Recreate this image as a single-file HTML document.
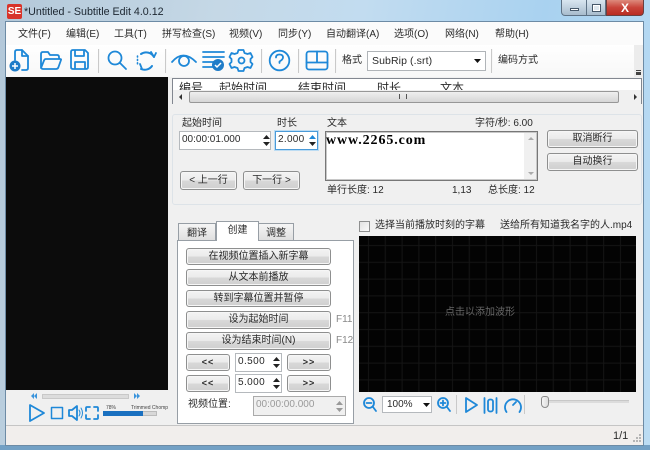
<!DOCTYPE html>
<html><head><meta charset="utf-8"><style>
html,body{margin:0;padding:0}
body{width:650px;height:450px;overflow:hidden;position:relative;background:#b5d3ec;font:10px/14px "Liberation Sans","Noto Sans CJK SC",sans-serif;color:#2a2a2a;filter:blur(.3px)}
div,span{position:absolute;box-sizing:border-box;white-space:nowrap}
svg{position:absolute;overflow:visible}
.t{line-height:14px}
.c{text-align:center}
.btn{background:linear-gradient(#f3f3f3,#ebebeb 48%,#d8d8d8 52%,#cfcfcf);border:1px solid #8e8f8f;border-radius:3px;text-align:center;line-height:15px;box-shadow:inset 0 0 0 1px #f6f6f6}
.in{background:#fff;border:1px solid #b5b9bd;line-height:16px;padding-left:2px}
.ic{fill:none;stroke:#1e88d8;stroke-width:1.8;stroke-linecap:round;stroke-linejoin:round}
.sep{width:2px;background:#c9c9c9;border-right:1px solid #f7f7f7}
.bl{fill:#111}
</style></head><body>
<div style="left:0;top:0;width:650px;height:450px;background:linear-gradient(100deg,#b3c8d9 0,#c5d8e6 30%,#c2dcf0 50%,#a9d2f0 75%,#bcdcf3 100%)"></div>
<div style="left:0;top:445px;width:650px;height:5px;background:#73a0c4"></div>
<div style="left:5px;top:21px;width:639px;height:425px;background:#f0f0f0;border:1px solid #6d8ba5"></div>

<!-- title -->
<div style="left:7px;top:4px;width:15px;height:15px;background:#d8332a;border-radius:2px;color:#fff;font:bold 10px/15px 'Liberation Sans';text-align:center">SE</div>
<div class="t" style="left:24px;top:5px;font-size:10.7px;color:#1c2630">*Untitled - Subtitle Edit 4.0.12</div>
<div style="left:561px;top:0;width:26px;height:16px;background:linear-gradient(#d9e6f0,#a8bccd);border:1px solid #5e7285;border-top:0;border-radius:0 0 0 4px"></div>
<div style="left:570px;top:8px;width:9px;height:3px;background:#fff;border:1px solid #46586a"></div>
<div style="left:587px;top:0;width:19px;height:16px;background:linear-gradient(#d9e6f0,#a8bccd);border:1px solid #5e7285;border-top:0;border-left:0"></div>
<div style="left:592px;top:4px;width:9px;height:8px;background:#dfe8ef;border:1px solid #46586a;box-shadow:inset 0 0 0 1px #fff"></div>
<div style="left:606px;top:0;width:38px;height:16px;background:linear-gradient(#dd8a7c,#c9443a 50%,#b92c22);border:1px solid #6a4040;border-top:0;border-radius:0 0 4px 0"></div>
<div style="left:606px;top:1px;width:38px;height:14px;color:#fff;font:bold 12px/14px 'Liberation Sans';text-align:center">X</div>

<!-- menu -->
<div style="left:6px;top:22px;width:637px;height:23px;background:#fbfbfb"></div>
<div class="t" style="left:18px;top:28px">文件(F)</div>
<div class="t" style="left:66px;top:28px">编辑(E)</div>
<div class="t" style="left:114px;top:28px">工具(T)</div>
<div class="t" style="left:162px;top:28px">拼写检查(S)</div>
<div class="t" style="left:229px;top:28px">视频(V)</div>
<div class="t" style="left:278px;top:28px">同步(Y)</div>
<div class="t" style="left:326px;top:28px">自动翻译(A)</div>
<div class="t" style="left:394px;top:28px">选项(O)</div>
<div class="t" style="left:445px;top:28px">网络(N)</div>
<div class="t" style="left:495px;top:28px">帮助(H)</div>

<!-- toolbar -->
<div style="left:6px;top:45px;width:637px;height:32px;background:linear-gradient(#fff,#f7f7f7)"></div>
<div style="left:634px;top:45px;width:9px;height:32px;background:#ececec"></div>
<div style="left:636px;top:70px;width:5px;height:5px;border-top:1px solid #444;border-bottom:3px solid #444"></div>
<svg style="left:0;top:0" width="650" height="80" viewBox="0 0 650 80">
<g class="ic">
<path d="M15 60V52q0-2 2-2h5l6 6v12q0 2-2 2h-4"/><path d="M22 50v6h6"/>
<path d="M41 68V54q0-2 2-2h5l2 3h7q2 0 2 2v2M41 68q1 1 2 1h13q2 0 2.500-2l2.500-7q.5-1-1-1H46q-1.500 0-2 1.500L41 68"/>
<path d="M71 52q0-2 2-2h12l3 3v14q0 2-2 2H73q-2 0-2-2zM75 50v6h9v-6M75 69v-7h10v7"/>
<circle cx="115" cy="58" r="6.500"/><path d="M120 63l6 6"/>
<path d="M141 54a9 9 0 0 1 13 3M152 66a9 9 0 0 1-11 3" stroke-width="2"/><path d="M151 52l3 5 2-4M140 64l2 5"/>
<path d="M137.500 56v9" stroke-width="1.600" stroke-dasharray="1 2.400"/>
<path d="M172 62q11-13 24 0"/><circle cx="184" cy="61" r="5"/>
<path d="M203 52h21M203 57h21M203 62h12M203 67h10"/>
<path d="M239 50h5l1 3 3 1 3-1 2 4-2 2v3l2 2-2 4-3-1-3 1-1 3h-5l-1-3-3-1-3 1-2-4 2-2v-3l-2-2 2-4 3 1 3-1z" transform="translate(-.5 0)"/><circle cx="241.500" cy="60.500" r="3"/>
<circle cx="279.500" cy="60.500" r="9.800"/><path d="M276 57.500q0-3 3.500-3t3.500 3q0 2-3.500 4v1.500"/>
<rect x="306.500" y="51.500" width="21" height="18" rx="2.500"/><path d="M306.500 62.500h21M317 51.500v11"/>
</g>
<circle cx="15" cy="66" r="5.500" fill="#1f7cc8"/><path d="M12 66h6M15 63v6" stroke="#fff" stroke-width="1.500"/>
<circle cx="218" cy="65" r="6" fill="#1f7cc8"/><path d="M215 65l2 2 4-4" stroke="#fff" stroke-width="1.500" fill="none"/>
</svg>
<div class="sep" style="left:98px;top:49px;height:24px"></div>
<div class="sep" style="left:165px;top:49px;height:24px"></div>
<div class="sep" style="left:261px;top:49px;height:24px"></div>
<div class="sep" style="left:298px;top:49px;height:24px"></div>
<div class="sep" style="left:335px;top:49px;height:24px"></div>
<div class="t" style="left:342px;top:54px">格式</div>
<div style="left:367px;top:51px;width:119px;height:20px;background:#fff;border:1px solid #b0b4b8;line-height:18px;padding-left:4px;font-size:10.5px;letter-spacing:.1px">SubRip (.srt)</div>
<svg style="left:474px;top:59px" width="7" height="4"><path d="M0 0h7L3.500 4z" fill="#111"/></svg>
<div class="sep" style="left:491px;top:49px;height:24px"></div>
<div class="t" style="left:498px;top:54px">编码方式</div>

<!-- video -->
<div style="left:6px;top:77px;width:162px;height:313px;background:#0c0c0c"></div>

<!-- list -->
<div style="left:172px;top:78px;width:470px;height:26px;background:#fff;border:1px solid #828790;overflow:hidden">
<span class="t" style="left:6px;top:2px;font-size:12px">编号</span>
<span class="t" style="left:46px;top:2px;font-size:12px">起始时间</span>
<span class="t" style="left:125px;top:2px;font-size:12px">结束时间</span>
<span class="t" style="left:204px;top:2px;font-size:12px">时长</span>
<span class="t" style="left:267px;top:2px;font-size:12px">文本</span>
</div>
<div style="left:173px;top:90px;width:468px;height:14px;background:#f0f0f0"></div>
<div style="left:189px;top:91px;width:430px;height:12px;background:linear-gradient(#efefef,#d6d6d6);border:1px solid #979797;border-radius:2px"></div>
<svg style="left:179px;top:94px" width="4" height="6"><path d="M3 0v6L0 3z" fill="#333"/></svg>
<svg style="left:634px;top:94px" width="4" height="6"><path d="M0 0v6l3-3z" fill="#333"/></svg>
<div style="left:399px;top:94px;width:8px;height:5px;border-left:1px solid #555;border-right:1px solid #555"></div>

<!-- edit group -->
<div style="left:172px;top:114px;width:470px;height:91px;border:1px solid #dde3e8;border-radius:3px"></div>
<div class="t" style="left:182px;top:117px">起始时间</div>
<div class="t" style="left:277px;top:117px">时长</div>
<div class="t" style="left:327px;top:117px">文本</div>
<div class="t" style="left:475px;top:117px">字符/秒: 6.00</div>
<div class="in" style="left:179px;top:131px;width:92px;height:19px">00:00:01.000</div>
<svg style="left:263px;top:135px" width="7" height="11"><path d="M0 4h7L3.500 0zM0 7h7L3.500 11z" fill="#222"/></svg>
<div class="in" style="left:275px;top:131px;width:43px;height:19px;border:1px solid #4a9ad8;box-shadow:0 0 0 1px #bcdcf3;letter-spacing:.3px">2.000</div>
<svg style="left:309px;top:135px" width="7" height="11"><path d="M0 4h7L3.500 0z" fill="#1e88d8"/><path d="M0 7h7L3.500 11z" fill="#222"/></svg>
<div style="left:325px;top:131px;width:213px;height:50px;background:#fff;border:1px solid #777;box-shadow:inset 0 0 0 1px #c8c8c8"></div>
<div style="left:326px;top:133px;font:bold 14px/16px 'Liberation Serif',serif;color:#000;letter-spacing:.9px">www.2265.com</div>
<div style="left:524px;top:133px;width:12px;height:46px;background:#f0f0f0"></div>
<svg style="left:528px;top:137px" width="6" height="40"><path d="M0 3h6L3 0zM0 35h6l-3 3z" fill="#aaa"/></svg>
<div class="btn" style="left:547px;top:130px;width:91px;height:18px">取消断行</div>
<div class="btn" style="left:547px;top:153px;width:91px;height:18px">自动换行</div>
<div class="btn" style="left:180px;top:171px;width:57px;height:19px;line-height:17px">&lt; 上一行</div>
<div class="btn" style="left:243px;top:171px;width:57px;height:19px;line-height:17px">下一行 &gt;</div>
<div class="t" style="left:327px;top:184px">单行长度: 12</div>
<div class="t" style="left:452px;top:184px">1,13</div>
<div class="t" style="left:488px;top:184px">总长度: 12</div>

<!-- tabs -->
<div style="left:177px;top:240px;width:177px;height:184px;background:#fff;border:1px solid #979ea5"></div>
<div class="c" style="left:178px;top:223px;width:38px;height:18px;background:linear-gradient(#f5f5f5,#dfdfdf);border:1px solid #979ea5;line-height:19px">翻译</div>
<div class="c" style="left:258px;top:223px;width:36px;height:18px;background:linear-gradient(#f5f5f5,#dfdfdf);border:1px solid #979ea5;line-height:19px">调整</div>
<div class="c" style="left:216px;top:221px;width:43px;height:20px;background:#fff;border:1px solid #979ea5;border-bottom:0;line-height:17px">创建</div>
<div class="btn" style="left:186px;top:248px;width:145px;height:17px">在视频位置插入新字幕</div>
<div class="btn" style="left:186px;top:269px;width:145px;height:17px">从文本前播放</div>
<div class="btn" style="left:186px;top:290px;width:145px;height:17px">转到字幕位置并暂停</div>
<div class="btn" style="left:186px;top:311px;width:145px;height:18px">设为起始时间</div>
<div class="btn" style="left:186px;top:332px;width:145px;height:18px">设为结束时间(N)</div>
<div class="t" style="left:336px;top:313px;color:#888">F11</div>
<div class="t" style="left:336px;top:334px;color:#888">F12</div>
<div class="btn" style="left:186px;top:354px;width:44px;height:17px;font-weight:bold;font-size:9px;letter-spacing:1px">&lt;&lt;</div>
<div class="btn" style="left:287px;top:354px;width:44px;height:17px;font-weight:bold;font-size:9px;letter-spacing:1px">&gt;&gt;</div>
<div class="btn" style="left:186px;top:375px;width:44px;height:17px;font-weight:bold;font-size:9px;letter-spacing:1px">&lt;&lt;</div>
<div class="btn" style="left:287px;top:375px;width:44px;height:17px;font-weight:bold;font-size:9px;letter-spacing:1px">&gt;&gt;</div>
<div class="in" style="left:235px;top:353px;width:47px;height:19px;padding-left:2px;letter-spacing:.4px">0.500</div>
<div class="in" style="left:235px;top:374px;width:47px;height:19px;padding-left:2px;letter-spacing:.4px">5.000</div>
<svg style="left:273px;top:357px" width="7" height="11"><path d="M0 4h7L3.500 0zM0 7h7L3.500 11z" fill="#222"/></svg>
<svg style="left:273px;top:378px" width="7" height="11"><path d="M0 4h7L3.500 0zM0 7h7L3.500 11z" fill="#222"/></svg>
<div class="t" style="left:188px;top:398px">视频位置:</div>
<div class="in" style="left:253px;top:396px;width:93px;height:20px;background:#f0f0f0;border-color:#aaa;color:#9a9a9a">00:00:00.000</div>
<svg style="left:336px;top:401px" width="7" height="11"><path d="M0 4h7L3.500 0zM0 7h7L3.500 11z" fill="#999"/></svg>

<!-- right top -->
<div style="left:359px;top:221px;width:11px;height:11px;background:linear-gradient(135deg,#e2e2e2,#fafafa);border:1px solid #8e8f8f"></div>
<div class="t" style="left:375px;top:219px">选择当前播放时刻的字幕</div>
<div class="t" style="left:500px;top:219px">送给所有知道我名字的人.mp4</div>
<svg style="left:359px;top:236px" width="277" height="156">
<defs><pattern id="g" width="16.800" height="16.800" patternUnits="userSpaceOnUse"><path d="M9.500 0V16.800M0 9.500H16.800" stroke="#151515" stroke-width="1"/></pattern></defs>
<rect width="277" height="156" fill="#030303"/><rect width="277" height="156" fill="url(#g)"/>
<text x="86" y="79" font-size="10" fill="#666" font-family="Liberation Sans,Noto Sans CJK SC,sans-serif">点击以添加波形</text>
</svg>

<!-- right controls -->
<svg style="left:0;top:390px" width="650" height="40" viewBox="0 390 650 40">
<g class="ic">
<circle cx="369" cy="403" r="5"/><path d="M366.500 403h5M373 407l3 4"/>
<circle cx="443" cy="403" r="5"/><path d="M440.500 403h5M443 400.500v5M447 407l3 4"/>
<path d="M466 398l11 7-11 7z"/>
<path d="M484.500 398v15M496.500 398v15"/><rect x="488" y="399.500" width="5" height="12" rx="2"/>
<path d="M506.500 412a8 8 0 1 1 13 0" stroke-width="1.800"/><path d="M513 405l3-3"/>
</g>
<path d="M30 405l14 8-14 8z" class="ic" style="stroke-width:1.800"/>
<rect x="51.500" y="407.500" width="11" height="11" class="ic" style="stroke-width:1.500"/>
<path d="M69 410v6h3l5 4v-14l-5 4z" class="ic"/><path d="M79 410q2 3 0 6M81 408q3 5 0 10" class="ic" style="stroke-width:1"/>
<path d="M86 411v-3q0-1 1-1h3M94 407h3q1 0 1 1v3M98 415v3q0 1-1 1h-3M90 419h-3q-1 0-1-1v-3" class="ic"/>
<path d="M37 393v6l-3-3zM34 393v6l-3-3zM134 393v6l3-3zM137 393v6l3-3z" fill="#3a94dc"/>
</svg>
<div style="left:42px;top:394px;width:87px;height:5px;background:#dcdcdc;border:1px solid #c8c8c8"></div>
<div style="left:103px;top:411px;width:54px;height:5px;background:#d8d8d8;border:1px solid #bbb"></div>
<div style="left:103px;top:411px;width:40px;height:5px;background:#1a70c0"></div>
<div style="left:106px;top:405px;font-size:5px;line-height:6px;color:#444">78%</div>
<div style="left:131px;top:405px;font-size:5px;line-height:6px;color:#444">Trimmed Chomp</div>

<div style="left:382px;top:396px;width:50px;height:17px;background:#fff;border:1px solid #b5b9bd;line-height:16px;padding-left:4px">100%</div>
<svg style="left:423px;top:403px" width="7" height="4"><path d="M0 0h7L3.500 4z" fill="#111"/></svg>
<div class="sep" style="left:456px;top:395px;height:19px;width:1px;border:0"></div>
<div class="sep" style="left:524px;top:395px;height:19px;width:1px;border:0"></div>
<div style="left:543px;top:400px;width:86px;height:3px;background:#dcdcdc;border-top:1px solid #c8c8c8"></div>
<div style="left:541px;top:396px;width:8px;height:12px;background:linear-gradient(90deg,#f5f5f5,#ddd);border:1px solid #8a8a8a;border-radius:3px 3px 4px 4px"></div>

<!-- status -->
<div style="left:6px;top:425px;width:637px;height:20px;background:#f1eeec;border-top:1px solid #c5c5c5"></div>
<div class="t" style="left:613px;top:429px;font-size:11px">1/1</div>
<svg style="left:633px;top:434px" width="9" height="9"><path d="M6 0h2v2H6zM3 3h2v2H3zM6 3h2v2H6zM0 6h2v2H0zM3 6h2v2H3zM6 6h2v2H6z" fill="#b5b5b5"/></svg>
</body></html>
